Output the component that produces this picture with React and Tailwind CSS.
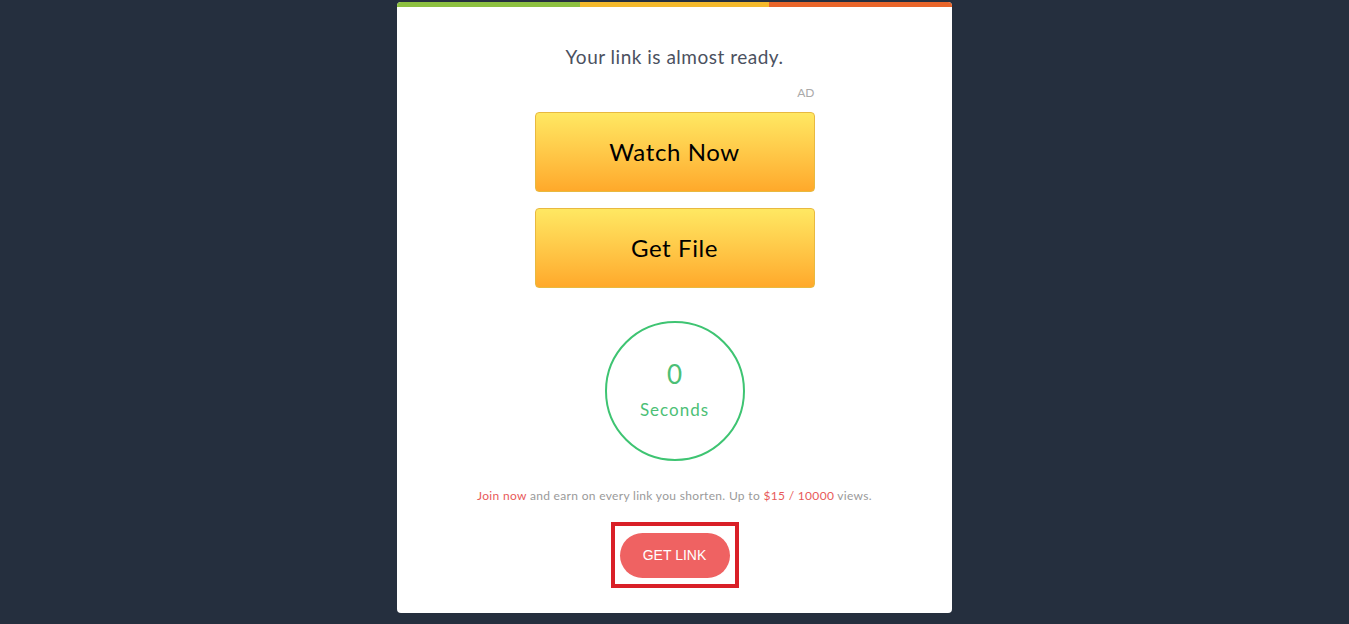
export default function App() {
  return (
    <div className="min-h-screen bg-[#252f3e] pt-[2px] font-['Lato',sans-serif]">
      <div className="mx-auto w-[555px] bg-white rounded-[4px] overflow-hidden">
        {/* Colour strip */}
        <div className="flex h-[5px]">
          <div className="w-[183px] bg-[#8dc040]" />
          <div className="w-[189px] bg-[#f4b92c]" />
          <div className="flex-1 bg-[#e8652a]" />
        </div>

        <div className="flex flex-col items-center pt-[36px] pb-[25px]">
          <h1 className="text-[19px] leading-[28px] text-[#4b5160] tracking-[0.5px]">Your link is almost ready.</h1>

          <div className="w-[280px] mt-[13px] text-right text-[12px] leading-[18px] text-[#aaaaaa]">AD</div>

          <div className="w-[280px] mt-[10px] flex flex-col gap-4">
            <button className="h-[80px] w-full rounded-[4px] border border-[#e8b940] bg-gradient-to-b from-[#ffe862] to-[#ffa92a] text-[24px] text-black tracking-[0.6px]">
              Watch Now
            </button>
            <button className="h-[80px] w-full rounded-[4px] border border-[#e8b940] bg-gradient-to-b from-[#ffe862] to-[#ffa92a] text-[24px] text-black tracking-[0.6px]">
              Get File
            </button>
          </div>

          <div className="mt-[33px] w-[140px] h-[140px] rounded-full border-2 border-[#3ec472] flex flex-col items-center justify-center text-[#4cbf76]">
            <span className="text-[26px] leading-[30px] mt-[-2px]">0</span>
            <span className="text-[17px] leading-[22px] mt-[10px] tracking-[1px]">Seconds</span>
          </div>

          <p className="mt-[26px] text-[12px] leading-[18px] text-[#9a9a9a] tracking-[0.32px]">
            <span className="text-[#e85a5a]">Join now</span> and earn on every link you shorten. Up to{' '}
            <span className="text-[#e85a5a]">$15 / 10000</span> views.
          </p>

          <div className="mt-[17px] border-4 border-[#d91f27] px-[5px] pt-[7px] pb-[6px]">
            <button className="w-[110px] h-[45px] rounded-full bg-[#ef6262] text-white text-[14px] font-['Liberation_Sans',sans-serif] uppercase">
              Get Link
            </button>
          </div>
        </div>
      </div>
    </div>
  )
}
